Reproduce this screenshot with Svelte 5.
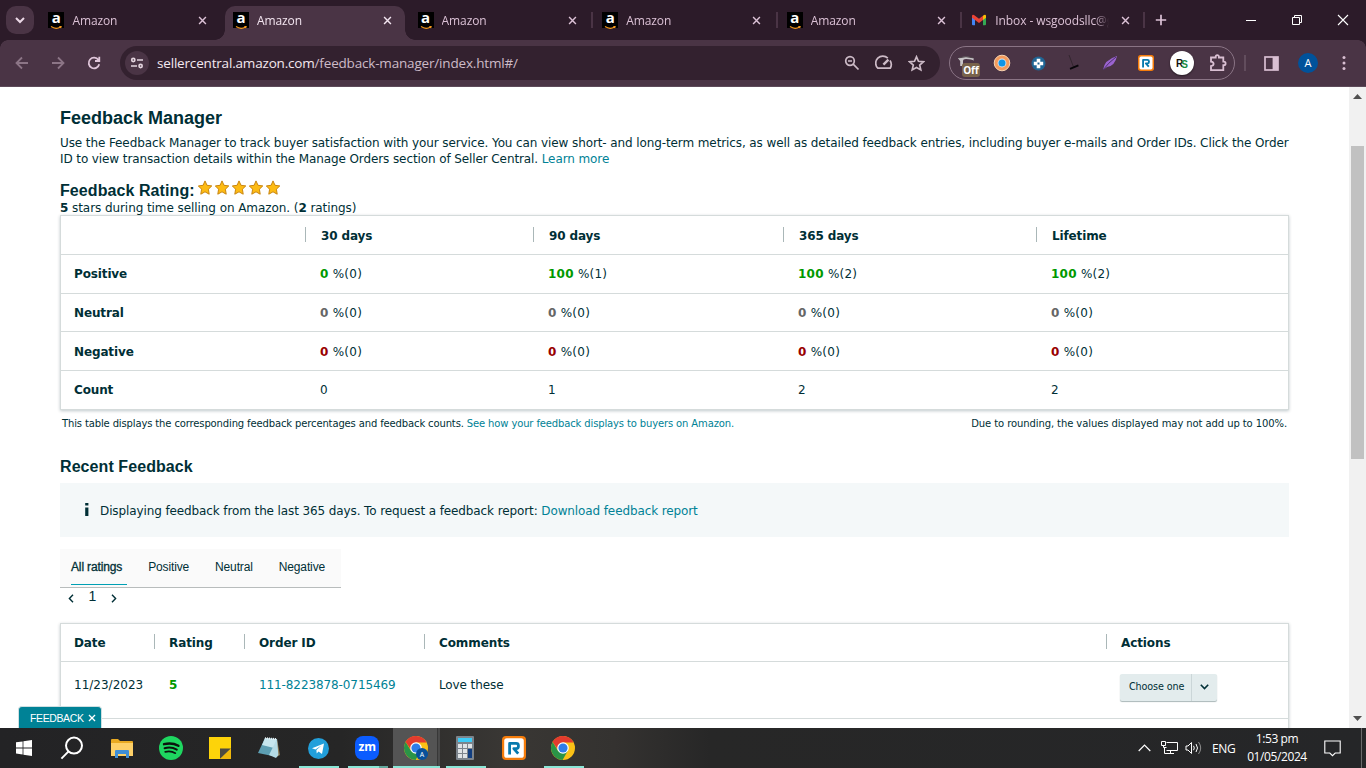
<script lang="ts">
	type Share = { pct: number; count: number };

	const tabs = [
		{ title: 'Amazon', icon: 'amazon', active: false, divider: false },
		{ title: 'Amazon', icon: 'amazon', active: true, divider: false },
		{ title: 'Amazon', icon: 'amazon', active: false, divider: true },
		{ title: 'Amazon', icon: 'amazon', active: false, divider: true },
		{ title: 'Amazon', icon: 'amazon', active: false, divider: true },
		{ title: 'Inbox - wsgoodsllc@g', icon: 'gmail', active: false, divider: true }
	];

	const periods = ['30 days', '90 days', '365 days', 'Lifetime'];

	const ratings: { name: string; tone: string; values: Share[] }[] = [
		{
			name: 'Positive',
			tone: 'positive',
			values: [
				{ pct: 0, count: 0 },
				{ pct: 100, count: 1 },
				{ pct: 100, count: 2 },
				{ pct: 100, count: 2 }
			]
		},
		{ name: 'Neutral', tone: 'neutral', values: periods.map(() => ({ pct: 0, count: 0 })) },
		{ name: 'Negative', tone: 'negative', values: periods.map(() => ({ pct: 0, count: 0 })) }
	];

	const counts = [0, 1, 2, 2];
	const filters = ['All ratings', 'Positive', 'Neutral', 'Negative'];
	let filter = $state('All ratings');

	const apps = [
		{ name: 'explorer', state: '' },
		{ name: 'spotify', state: '' },
		{ name: 'sticky', state: '' },
		{ name: 'notepad', state: '' },
		{ name: 'telegram', state: 'running' },
		{ name: 'zoom', state: 'running stacked' },
		{ name: 'chrome-a', state: 'running current' },
		{ name: 'calc', state: 'running' },
		{ name: 'ring', state: '' },
		{ name: 'chrome', state: 'running' }
	];
</script>

{#snippet cross(size: number)}
	<svg width={size} height={size} viewBox="0 0 10 10" fill="none" stroke="currentColor" stroke-width="1.6">
		<path d="M1.2 1.2l7.6 7.6M8.8 1.2l-7.6 7.6" />
	</svg>
{/snippet}

{#snippet chrome(badge: boolean)}
	<svg width="24" height="24" viewBox="0 0 24 24">
		<circle cx="12" cy="12" r="12" fill="#fbc116" />
		<path d="M12 6.5h10.6A12 12 0 0 0 1.6 6l5.6 8z" fill="#e33b2e" />
		<path d="M1.6 6A12 12 0 0 0 11.6 24l5.2-9.2L12 12 7 14.8z" fill="#2a9447" />
		<circle cx="12" cy="12" r="5.8" fill="#fff" />
		<circle cx="12" cy="12" r="4.6" fill="#2f7de9" />
		{#if badge}
			<circle cx="18" cy="18" r="6" fill="#08519b" />
			<text x="18" y="20.5" text-anchor="middle" font-size="7" fill="#fff">A</text>
		{/if}
	</svg>
{/snippet}

{#snippet ring(size: number)}
	<svg width={size} height={size} viewBox="0 0 24 24">
		<rect width="24" height="24" rx="4" fill="#f57c0b" />
		<rect x="2.2" y="2.2" width="19.6" height="19.6" rx="2.6" fill="#fff" />
		<path d="M7.6 18.6V7.4h6.6q2.2 0 2.2 2v1.2q0 2-2.2 2h-2.4l4.4 5" fill="none" stroke="#0779ad" stroke-width="2.8" stroke-linejoin="round" />
	</svg>
{/snippet}

<div class="screen">
	<header class="strip">
		<button class="tab-search" aria-label="Search tabs">
			<svg width="10" height="7" viewBox="0 0 10 7" fill="none" stroke="currentColor" stroke-width="2">
				<path d="M1 1l4 4 4-4" />
			</svg>
		</button>
		<div class="tabs">
			{#each tabs as tab}
				<div class="tab" class:active={tab.active} class:divider={tab.divider}>
					{#if tab.icon === 'amazon'}
						<span class="favicon amazon">
							<b>a</b>
							<svg width="12" height="4" viewBox="0 0 12 4"><path d="M1 .6q5 3.2 9.4.4M9.3.5l1.8-.1-.5 1.8" fill="none" stroke="#f79a1c" stroke-width="1.2" /></svg>
						</span>
					{:else}
						<svg class="favicon" width="16" height="16" viewBox="0 0 16 16">
							<path d="M1 4v8.2q0 1 1 1h2V6z" fill="#4285f4" />
							<path d="M15 4v8.2q0 1-1 1h-2V6z" fill="#34a853" />
							<path d="M12 3.7l1-.8q2-.8 2 1.2v1.6l-3 2.3z" fill="#fbbc04" />
							<path d="M4 8L1 5.7V4.1q0-2 2-1.2l5 3.8 4-3V8l-4 3z" fill="#ea4335" />
						</svg>
					{/if}
					<span class="tab-title">{tab.title}</span>
					<span class="tab-close">{@render cross(9)}</span>
				</div>
			{/each}
		</div>
		<svg class="new-tab" width="12" height="12" viewBox="0 0 12 12" stroke="currentColor" stroke-width="1.7">
			<path d="M6 .8v10.4M.8 6h10.4" />
		</svg>
		<div class="window-buttons">
			<svg width="12" height="12" viewBox="0 0 12 12" stroke="#fff" fill="none"><path d="M1 6.5h10" /></svg>
			<svg width="12" height="12" viewBox="0 0 12 12" stroke="#fff" fill="none"><path d="M1.5 3.5h7v7h-7zM3.5 3.5v-2h7v7h-2" /></svg>
			<svg width="12" height="12" viewBox="0 0 12 12" stroke="#fff" fill="none" stroke-width="1.1"><path d="M1 1l10 10M11 1L1 11" /></svg>
		</div>
	</header>

	<nav class="toolbar">
		<div class="nav-icons">
			<svg class="dim" width="16" height="16" viewBox="0 0 16 16"><path d="M14 8H3M8 2.5L2.5 8 8 13.5" /></svg>
			<svg class="dim" width="16" height="16" viewBox="0 0 16 16"><path d="M2 8h11M8 2.5L13.5 8 8 13.5" /></svg>
			<svg width="16" height="16" viewBox="0 0 16 16"><path d="M13.2 9.2A5.3 5.3 0 1 1 12.4 5M13.3 1.8V6H9" /></svg>
		</div>
		<div class="omnibox">
			<span class="site-info">
				<svg width="14" height="14" viewBox="0 0 14 14" fill="none" stroke="currentColor" stroke-width="1.6">
					<circle cx="3.3" cy="4" r="1.6" /><path d="M7 4h6M1 10h6" /><circle cx="10.6" cy="10" r="1.6" />
				</svg>
			</span>
			<span class="url"><b>sellercentral.amazon.com</b>/feedback-manager/index.html#/</span>
			<div class="omni-icons">
				<svg width="16" height="16" viewBox="0 0 16 16"><circle cx="6" cy="6" r="4.3" /><path d="M9.2 9.2l5.3 5.3M4 6h4" /></svg>
				<svg width="18" height="16" viewBox="0 0 18 16"><path d="M12.8 3.2A7 7 0 0 0 2.8 13.2h12.4A7 7 0 0 0 15 5.6" /><path d="M8.4 9.6l5-5" stroke-width="2.4" /></svg>
				<svg width="17" height="17" viewBox="0 0 17 17"><path d="M8.5 1.8l2 4.5 4.9.5-3.7 3.3 1.1 4.8-4.3-2.5-4.3 2.5 1.1-4.8-3.7-3.3 4.9-.5z" /></svg>
			</div>
		</div>
		<div class="extensions">
			<span class="ext hat">
				<svg width="20" height="16" viewBox="0 0 20 16">
					<path d="M1 3.2q8-3.6 15.6 0v2.6q-1.4-1.6-7.6-1.8-3 0-3 2v5H3.2V6z" fill="#c9c5c8" />
					<path d="M2 2.8q7-2.2 14 0" stroke="#4c4449" fill="none" />
				</svg>
				<em>Off</em>
			</span>
			<span class="ext">
				<svg width="18" height="18" viewBox="0 0 18 18"><circle cx="9" cy="9" r="7.8" fill="#f39a5c" stroke="#f8d3b0" /><circle cx="9" cy="9" r="4.4" fill="#dae4ec" /><circle cx="9" cy="9" r="3.5" fill="#0d95e8" /></svg>
			</span>
			<span class="ext">
				<svg width="15" height="15" viewBox="0 0 15 15"><circle cx="7.5" cy="7.5" r="7" fill="#1f6594" /><path d="M5.7 2.8h3.6v2.9h2.9v3.6H9.3v2.9H5.7V9.3H2.8V5.7h2.9z" fill="#fff" /><rect x="6.5" y="6.5" width="2" height="2" fill="#1f6594" /></svg>
			</span>
			<span class="ext">
				<svg width="18" height="18" viewBox="0 0 18 18"><path d="M4 1l4.5 12" stroke="#33262f" /><path d="M5 14.8l8.4-3.4" stroke="#08060a" stroke-width="1.8" /></svg>
			</span>
			<span class="ext">
				<svg width="16" height="16" viewBox="0 0 16 16"><path d="M1 15Q2 5 15 1q-2 10-10 11z" fill="#9a63cf" /><path d="M1 15Q6 8 14 2" stroke="#4d3070" fill="none" /></svg>
			</span>
			<span class="ext">{@render ring(16)}</span>
			<span class="ext rs"><i>R</i><i>S</i></span>
			<span class="ext">
				<svg width="18" height="18" viewBox="0 0 18 18" fill="none" stroke="#d9bfd2" stroke-width="1.8"><path d="M2 3.5h4.7V2.8a1.6 1.6 0 0 1 3.2 0v.7h4.4v4.2h.6a1.7 1.7 0 0 1 0 3.4h-.6v5H2v-4q2.6-.4 2.6-2.3T2 7.6z" /></svg>
			</span>
		</div>
		<span class="bar-line"></span>
		<svg class="panel-icon" width="15" height="15" viewBox="0 0 15 15"><rect x="1" y="1" width="13" height="13" fill="none" stroke="#d9bfd2" stroke-width="1.7" /><rect x="8.6" y="1" width="5.4" height="13" fill="#d9bfd2" /></svg>
		<span class="avatar">A</span>
		<svg class="menu-icon" width="4" height="16" viewBox="0 0 4 16" fill="#d9bfd2"><circle cx="2" cy="2.6" r="1.5" /><circle cx="2" cy="8" r="1.5" /><circle cx="2" cy="13.4" r="1.5" /></svg>
	</nav>

	<div class="viewport">
		<main>
			<h1>Feedback Manager</h1>
			<p class="intro">
				<span class="line">Use the Feedback Manager to track buyer satisfaction with your service. You can view short- and long-term metrics, as well as detailed feedback entries, including buyer e-mails and Order IDs. Click the Order</span>
				<span class="line">ID to view transaction details within the Manage Orders section of Seller Central. <a href="#/">Learn more</a></span>
			</p>

			<div class="rating">
				<h2>Feedback Rating:</h2>
				<div class="stars">
					{#each Array(5) as _}
						<svg width="17" height="16" viewBox="0 0 17 16">
							<path d="M7 .9l2 4.4 4.8.6-3.4 3.3.8 5-4.2-2.4-4.2 2.4.8-5L.3 5.9l4.8-.6z" fill="#fdbb13" stroke="#c98611" stroke-linejoin="round" />
						</svg>
					{/each}
				</div>
			</div>
			<p class="summary"><b>5</b> stars during time selling on Amazon. (<b>2</b> ratings)</p>

			<div class="grid ratings">
				<div class="row head">
					<span></span>
					{#each periods as period}
						<span class="bar">{period}</span>
					{/each}
				</div>
				{#each ratings as rating}
					<div class="row">
						<b>{rating.name}</b>
						{#each rating.values as share}
							<span class="share"><b class={rating.tone}>{share.pct}</b> %({share.count})</span>
						{/each}
					</div>
				{/each}
				<div class="row">
					<b>Count</b>
					{#each counts as count}
						<span>{count}</span>
					{/each}
				</div>
			</div>

			<div class="notes">
				<span>This table displays the corresponding feedback percentages and feedback counts. <a href="#/">See how your feedback displays to buyers on Amazon.</a></span>
				<span class="rounding">Due to rounding, the values displayed may not add up to 100%.</span>
			</div>

			<h2 class="recent">Recent Feedback</h2>
			<div class="info">
				<svg width="6" height="14" viewBox="0 0 6 14" fill="#002f36"><path d="M1.2 0h3.2v2.6H1.2zM1.2 4.4h3.2V13H1.2z" /></svg>
				<p>Displaying feedback from the last 365 days. To request a feedback report: <a href="#/">Download feedback report</a></p>
			</div>

			<div class="filters">
				{#each filters as name}
					<button class:selected={filter === name} onclick={() => (filter = name)}>{name}</button>
				{/each}
			</div>
			<div class="pager">
				<svg width="6" height="9" viewBox="0 0 6 9"><path d="M5 .8L1.4 4.5 5 8.2" /></svg>
				<span>1</span>
				<svg width="6" height="9" viewBox="0 0 6 9"><path d="M1 .8l3.6 3.7L1 8.2" /></svg>
			</div>

			<div class="grid entries">
				<div class="row head">
					<span>Date</span>
					<span class="bar">Rating</span>
					<span class="bar">Order ID</span>
					<span class="bar">Comments</span>
					<span class="bar">Actions</span>
				</div>
				<div class="row entry">
					<span class="date-cell">11/23/2023</span>
					<b class="positive">5</b>
					<a href="#/">111-8223878-0715469</a>
					<span>Love these</span>
					<div class="choose">
						<span>Choose one</span>
						<i><svg width="9" height="6" viewBox="0 0 9 6" fill="none" stroke="#002f36" stroke-width="1.6"><path d="M.8.8l3.7 3.7L8.2.8" /></svg></i>
					</div>
				</div>
				<div class="row"></div>
			</div>
		</main>
		<aside class="scrollbar">
			<svg width="9" height="5" viewBox="0 0 9 5" fill="#505050"><path d="M0 5l4.5-5L9 5z" /></svg>
			<div class="track"><div class="thumb"></div></div>
			<svg width="9" height="5" viewBox="0 0 9 5" fill="#505050"><path d="M0 0l4.5 5L9 0z" /></svg>
		</aside>
		<div class="feedback-tab">FEEDBACK {@render cross(8)}</div>
	</div>

	<footer class="taskbar">
		<span class="start">
			<svg width="16" height="16" viewBox="0 0 16 16" fill="#fff"><path d="M0 2.3L6.6 1.4v6.1H0zM7.4 1.3L16 0v7.5H7.4zM0 8.4h6.6v6.1L0 13.6zM7.4 8.4H16V16l-8.6-1.3z" /></svg>
		</span>
		<span class="start">
			<svg width="24" height="24" viewBox="0 0 24 24" fill="none" stroke="#fff" stroke-width="2"><circle cx="14" cy="9.6" r="8" /><path d="M8.6 15.4L1.4 22.6" /></svg>
		</span>
		{#each apps as app}
			<span class="app {app.state}">
				{#if app.name === 'explorer'}
					<svg width="22" height="19" viewBox="0 0 22 19"><path d="M0 1q0-1 1-1h6l2 2h12q1 0 1 1v14H0z" fill="#e8a922" /><path d="M0 4h22v13H0z" fill="#fdd068" /><path d="M4 19v-7q0-1 1-1h12q1 0 1 1v7h-3v-4H7v4z" fill="#3f8ed6" /></svg>
				{:else if app.name === 'spotify'}
					<svg width="24" height="24" viewBox="0 0 24 24" fill="none" stroke="#0b140e" stroke-linecap="round"><circle cx="12" cy="12" r="12" fill="#1ed760" stroke="none" /><path d="M5 8.2q8-2 14.4 1.6" stroke-width="2.4" /><path d="M5.6 12.2q6.6-1.8 12.2 1.4" stroke-width="2" /><path d="M6.2 15.9q5.6-1.4 10.2 1.3" stroke-width="1.6" /></svg>
				{:else if app.name === 'sticky'}
					<svg width="22" height="22" viewBox="0 0 22 22"><path d="M0 0h22v22H0z" fill="#fdd30a" /><path d="M11 11.5h11L11 22z" fill="#4d4a41" /><path d="M22 11.5V22H11z" fill="#efb70c" /></svg>
				{:else if app.name === 'notepad'}
					<svg width="24" height="22" viewBox="0 0 24 22"><path d="M20 2l3 16-3.6 2z" fill="#8a7650" /><path d="M8 1l12 1-2 17.5L1 16z" fill="#5d9fb3" /><path d="M8 1l12 1-3 9-12-3z" fill="#c6e6ee" /><path d="M12 18l8-16 1.4 16-2.4 3z" fill="#b5dbe5" /><path d="M8 1.2l12 1" stroke="#e9eef0" stroke-width="2" stroke-dasharray="1 1" /></svg>
				{:else if app.name === 'telegram'}
					<svg width="21" height="21" viewBox="0 0 21 21"><circle cx="10.5" cy="10.5" r="10.5" fill="#229fda" /><path d="M4 10.3L16 5.4l-2 10.7-3.5-2.6-1.8 1.9-.3-3.4 5-4.4-6 3.8z" fill="#fff" /></svg>
				{:else if app.name === 'zoom'}
					<span class="zm">zm</span>
				{:else if app.name === 'calc'}
					<svg width="18" height="24" viewBox="0 0 18 24">
						<rect width="18" height="24" rx="1" fill="#7c848c" /><rect x="2" y="2" width="14" height="4" fill="#3ecbf6" />
						<path d="M2 8h4v4H2zM7 8h4v4H7zM12 8h4v4h-4zM2 13h4v4H2zM7 13h4v4H7zM2 18h4v4H2zM7 18h4v4H7z" fill="#dfe3e6" /><path d="M12 13h4v9h-4z" fill="#113e80" />
					</svg>
				{:else if app.name === 'ring'}
					{@render ring(24)}
				{:else}
					{@render chrome(app.name === 'chrome-a')}
				{/if}
			</span>
		{/each}
		<div class="tray">
			<svg width="13" height="8" viewBox="0 0 13 8" fill="none" stroke="#fff" stroke-width="1.2"><path d="M.7 7L6.5 1.2 12.3 7" /></svg>
			<svg class="net" width="17" height="14" viewBox="0 0 17 14" fill="none" stroke="#fff"><path d="M5.5 1.5h11v8h-11M3.5 6v6.5H13M9.5 9.5v3M.5.5h4v4h-4zM2.5 4.5v2h3" /></svg>
			<svg class="vol" width="17" height="14" viewBox="0 0 17 14" fill="none" stroke="#fff"><path d="M1 5h2l3.5-3.5v11L3 9H1zM8.5 4.8q1.6 2.2 0 4.4M11 3q3 4 0 8" /><path d="M13.5 1q4.4 6 0 12" stroke="#8d8d8d" /></svg>
			<span class="lang">ENG</span>
			<div class="clock"><span>1:53 pm</span><span class="date">01/05/2024</span></div>
			<svg class="note" width="17" height="17" viewBox="0 0 17 17" fill="none" stroke="#fff" stroke-width="1.1"><path d="M.8 1h15.4v12h-5L8.5 15.7 5.8 13h-5z" /></svg>
			<span class="peek"></span>
		</div>
	</footer>
</div>

<style>
	:global(body) {
		overflow: hidden;
	}

	.screen {
		width: 1366px;
		height: 768px;
		display: flex;
		flex-direction: column;
		overflow: hidden;
		background: #fff;
		font-family: 'Open Sans', 'Noto Sans', sans-serif;
	}

	svg {
		display: block;
		flex: none;
	}

	button {
		border: 0;
		padding: 0;
		font: inherit;
	}

	/* tab strip */
	.strip {
		flex: none;
		height: 40px;
		display: flex;
		align-items: center;
		background: #2c1b29;
		color: #dcc2d6;
	}

	.tab-search {
		width: 28px;
		height: 28px;
		margin-left: 6px;
		display: flex;
		align-items: center;
		justify-content: center;
		border-radius: 10px;
		background: #4a3445;
		color: #ecd9e7;
	}

	.tabs {
		display: flex;
		margin-left: 6.4px;
	}

	.tab {
		position: relative;
		box-sizing: border-box;
		width: 184.6px;
		height: 40px;
		display: flex;
		align-items: center;
		padding-left: 8px;
		font-size: 12px;
	}

	.tab.active::before {
		content: '';
		position: absolute;
		inset: 6px 5px 0 0;
		border-radius: 10px 10px 0 0;
		background: #4a3445;
	}

	.tab.active::after {
		content: '';
		position: absolute;
		left: -10px;
		right: -5px;
		bottom: 0;
		height: 10px;
		background:
			radial-gradient(circle at 0 0, #2c1b29 9.5px, #4a3445 10px) left / 10px 10px no-repeat,
			radial-gradient(circle at 100% 0, #2c1b29 9.5px, #4a3445 10px) right / 10px 10px no-repeat;
	}

	.tab.active {
		color: #f3e5f0;
	}

	.divider::after {
		content: '';
		position: absolute;
		right: 1px;
		top: 12px;
		width: 2px;
		height: 16px;
		background: #4a3445;
	}

	.tab:last-child::after {
		right: 3px;
	}

	.favicon,
	.tab-title,
	.tab-close {
		position: relative;
	}

	.amazon {
		width: 16px;
		height: 16px;
		display: flex;
		flex-direction: column;
		align-items: center;
		background: #000;
	}

	.amazon b {
		height: 12px;
		color: #fff;
		font: bold 15px/10px 'Open Sans', sans-serif;
	}

	.amazon svg {
		margin-top: 4px;
	}

	.tab-title {
		width: 116px;
		margin-left: 8px;
		white-space: nowrap;
		letter-spacing: -0.1px;
		mask-image: linear-gradient(90deg, #000 100px, transparent 114px);
	}

	.tab-close {
		margin-left: 10px;
	}

	.new-tab {
		margin-left: 6.6px;
	}

	.window-buttons {
		display: flex;
		gap: 34px;
		margin-left: auto;
		margin-right: 17px;
	}

	/* toolbar */
	.toolbar {
		flex: none;
		box-sizing: border-box;
		height: 47px;
		display: flex;
		align-items: center;
		background:
			radial-gradient(circle at 100% 100%, transparent 7.5px, #2c1b29 8px) left top / 8px 8px no-repeat,
			radial-gradient(circle at 0 100%, transparent 7.5px, #2c1b29 8px) right top / 8px 8px no-repeat,
			#4a3445;
		border-bottom: 1px solid #5d4a59;
	}

	.nav-icons {
		display: flex;
		gap: 20px;
		width: 106px;
		padding-left: 14px;
		fill: none;
		stroke: #e0c6da;
		stroke-width: 1.8;
	}

	.dim {
		stroke: #8c7586;
	}

	.omnibox {
		box-sizing: border-box;
		width: 820px;
		height: 34px;
		display: flex;
		align-items: center;
		padding: 0 15px 0 5px;
		border-radius: 17px;
		background: #33212f;
		color: #e4d5df;
	}

	.site-info {
		width: 24px;
		height: 24px;
		display: flex;
		align-items: center;
		justify-content: center;
		border-radius: 12px;
		background: #4a3445;
	}

	.url {
		margin: -1px 0 0 8px;
		font-size: 13.5px;
		letter-spacing: -0.18px;
		color: #cdbbc7;
	}

	.url b {
		font-weight: 400;
		color: #f3e8f0;
	}

	.omni-icons {
		display: flex;
		align-items: center;
		gap: 15px;
		margin-left: auto;
		fill: none;
		stroke: #cdbbc7;
		stroke-width: 1.7;
	}

	.extensions {
		box-sizing: border-box;
		width: 286px;
		height: 34px;
		margin-left: 9px;
		display: flex;
		align-items: center;
		border: 1px solid #8a7485;
		border-radius: 17px;
	}

	.ext {
		width: 36px;
		flex: none;
		display: flex;
		align-items: center;
		justify-content: center;
	}

	.ext.hat {
		width: 34px;
		position: relative;
	}

	.hat em {
		position: absolute;
		left: 12px;
		top: 8px;
		width: 18px;
		text-align: center;
		border-radius: 3px;
		background: #78624a;
		color: #fff;
		font: bold 10px/14px 'Open Sans', sans-serif;
	}

	.ext.rs {
		width: 24px;
		height: 24px;
		margin: 0 6px;
		border-radius: 12px;
		background: #fff;
		box-shadow: 0 1px 2px rgba(0, 0, 0, 0.5);
		font: bold 10px 'Liberation Sans', sans-serif;
		color: #111;
	}

	.rs i {
		font-style: normal;
	}

	.rs i + i {
		margin: 3px 0 0 -2px;
		color: #178a43;
	}

	.bar-line {
		width: 2px;
		height: 16px;
		margin-left: 9px;
		background: #624d5d;
	}

	.panel-icon {
		margin-left: 18px;
	}

	.avatar {
		width: 20px;
		height: 20px;
		margin-left: 19px;
		border-radius: 10px;
		background: #00529b;
		color: #fff;
		font-size: 11px;
		line-height: 20px;
		text-align: center;
	}

	.menu-icon {
		margin-left: 24px;
	}

	/* page */
	.viewport {
		position: relative;
		height: 641px;
		display: flex;
		overflow: hidden;
		color: #002f36;
		font: 12px/16px 'DejaVu Sans', sans-serif;
	}

	main {
		width: 1229px;
		padding: 0 60px;
	}

	a {
		color: #008296;
		text-decoration: none;
	}

	h1,
	h2,
	p {
		margin: 0;
	}

	h1 {
		margin-top: 20px;
		font: bold 18px/22px 'Liberation Sans', sans-serif;
	}

	h2 {
		font: bold 16px/20px 'Liberation Sans', sans-serif;
		letter-spacing: 0.08px;
	}

	.intro {
		margin-top: 6px;
	}

	.intro,
	.info {
		letter-spacing: -0.102px;
	}

	.info {
		letter-spacing: -0.11px;
	}

	.line {
		display: block;
		white-space: nowrap;
	}

	.rating {
		display: flex;
		height: 20px;
		margin-top: 14px;
	}

	.stars {
		display: flex;
		margin: -1px 0 0 3px;
	}

	.summary {
		margin-top: -1px;
		letter-spacing: -0.07px;
	}

	.grid {
		box-sizing: border-box;
		border: 1px solid #d5dbdb;
		box-shadow: 0 1px 3px rgba(0, 40, 50, 0.25);
	}

	.row {
		box-sizing: border-box;
		height: 38.7px;
		display: grid;
		align-items: center;
		border-top: 1px solid #d5dbdb;
	}

	.row:first-child {
		border-top: 0;
	}

	.ratings {
		height: 195px;
		margin-top: -1px;
	}

	.ratings .row {
		grid-template-columns: 246px 228px 250px 253px 1fr;
		padding-left: 13px;
		padding-top: 1px;
	}

	.ratings .head {
		height: 38px;
		padding-top: 2px;
	}

	.head,
	.row > b {
		font-weight: bold;
		letter-spacing: -0.13px;
	}

	.share {
		letter-spacing: 0.25px;
	}

	.bar {
		position: relative;
	}

	.ratings .bar {
		left: 1px;
	}

	.bar::before {
		content: '';
		position: absolute;
		left: -16px;
		top: -1px;
		width: 1px;
		height: 15px;
		background: #aab7b8;
	}

	.entries .bar::before {
		left: -15px;
	}

	.positive {
		color: #090;
	}

	.neutral {
		color: #666;
	}

	.negative {
		color: #900;
	}

	.notes {
		display: flex;
		justify-content: space-between;
		margin-top: 6px;
		padding: 0 2px;
		font-size: 10px;
		letter-spacing: -0.134px;
	}

	.rounding {
		letter-spacing: -0.09px;
	}

	.recent {
		margin-top: 25px;
	}

	.info {
		height: 54px;
		box-sizing: border-box;
		display: flex;
		align-items: center;
		gap: 10px;
		margin-top: 6px;
		padding: 1px 0 0 24px;
		background: #f4f8f9;
	}

	.info svg {
		margin-top: -2px;
	}

	.filters {
		box-sizing: border-box;
		width: 281px;
		height: 39px;
		display: flex;
		margin-top: 12px;
		padding: 0 11px;
		background: #fafafa;
		border-bottom: 1px solid #b8bcbc;
	}

	.filters button {
		height: 36px;
		margin-right: 26px;
		background: none;
		color: #002f36;
		font: 12px/34px 'Liberation Sans', sans-serif;
		letter-spacing: -0.14px;
		white-space: nowrap;
	}

	.filters .selected {
		border-bottom: 1px solid #00a0b4;
		padding-right: 5px;
		margin-right: 21px;
		-webkit-text-stroke: 0.3px #002f36;
	}

	.pager {
		display: flex;
		align-items: center;
		height: 19px;
		padding-left: 8px;
		fill: none;
		stroke: #002f36;
		stroke-width: 1.4;
	}

	.pager svg {
		margin-top: 2px;
	}

	.pager span {
		width: 37px;
		margin-top: -3px;
		text-align: center;
		font: 14px/18px 'Liberation Sans', sans-serif;
	}

	.entries {
		margin-top: 16px;
	}

	.entries .row {
		grid-template-columns: 95px 90px 180px 682px 1fr;
		padding-left: 13px;
		letter-spacing: -0.1px;
	}

	.entries .head {
		height: 37px;
	}

	.entries .entry {
		height: 57px;
		padding-bottom: 10px;
	}

	.entries .date-cell {
		letter-spacing: 0;
	}

	.choose {
		width: 97px;
		height: 27px;
		display: flex;
		margin: 0 0 -4px -1px;
		border-radius: 2px;
		background: #e3eced;
		box-shadow: 0 1px 1px #aab7b8;
		font-size: 9.6px;
		line-height: 26px;
	}

	.choose span {
		width: 71px;
		padding-left: 9px;
		box-sizing: border-box;
		white-space: nowrap;
	}

	.choose i {
		flex: 1;
		display: flex;
		align-items: center;
		justify-content: center;
		border-left: 1px solid #cbd6d8;
	}

	.scrollbar {
		box-sizing: border-box;
		width: 17px;
		display: flex;
		flex-direction: column;
		align-items: center;
		padding: 7px 0;
		background: #f1f1f1;
	}

	.track {
		flex: 1;
		padding-top: 47px;
	}

	.thumb {
		width: 13px;
		height: 313px;
		background: #c1c1c1;
	}

	.feedback-tab {
		position: absolute;
		left: 18px;
		bottom: 0;
		box-sizing: border-box;
		width: 84px;
		height: 22px;
		display: flex;
		align-items: center;
		gap: 4px;
		padding-left: 11px;
		border: 1px solid #cfdfe1;
		border-bottom: 0;
		border-radius: 4px 4px 0 0;
		background: #008296;
		color: #fff;
		font: 10.5px 'Liberation Sans', sans-serif;
		letter-spacing: -0.38px;
	}

	/* taskbar */
	.taskbar {
		flex: none;
		height: 40px;
		display: flex;
		background: linear-gradient(90deg, #232325, #262626 25%, #393734 37%, #343230 45%, #272727 52%, #252628);
		color: #fff;
	}

	.start {
		width: 48px;
		display: flex;
		align-items: center;
		justify-content: center;
	}

	.start + .start {
		margin-right: 1.8px;
	}

	.app {
		position: relative;
		width: 49px;
		display: flex;
		align-items: center;
		justify-content: center;
	}

	.running::after {
		content: '';
		position: absolute;
		left: 5px;
		right: 4px;
		bottom: 0;
		height: 2px;
		background: #8ae6d6;
	}

	.stacked::after {
		background: linear-gradient(90deg, #8ae6d6 31px, #62a89d 31px);
	}

	.current {
		background: linear-gradient(90deg, transparent 1px, #545454 1px 45px, #383838 45px 46px, #4a4a4a 46px 48px, transparent 48px);
	}

	.current::after {
		left: 1px;
		right: 1px;
	}

	.zm {
		width: 24px;
		height: 24px;
		border-radius: 8px;
		background: #0b5cff;
		font: bold 12px/22px 'Open Sans', sans-serif;
		text-align: center;
	}

	.tray {
		display: flex;
		align-items: center;
		margin-left: auto;
		font-size: 12px;
	}

	.net {
		margin-left: 10px;
	}

	.vol {
		margin-left: 7px;
	}

	.lang {
		width: 24px;
		margin-left: 10px;
		letter-spacing: -0.4px;
	}

	.clock {
		width: 60px;
		display: flex;
		flex-direction: column;
		align-items: center;
		margin-left: 11px;
		line-height: 18px;
	}

	.clock span {
		letter-spacing: -0.4px;
	}

	.note {
		margin-left: 17px;
	}

	.peek {
		width: 1px;
		height: 40px;
		margin: 0 4px 0 20px;
		background: #6a6a6b;
	}
</style>
